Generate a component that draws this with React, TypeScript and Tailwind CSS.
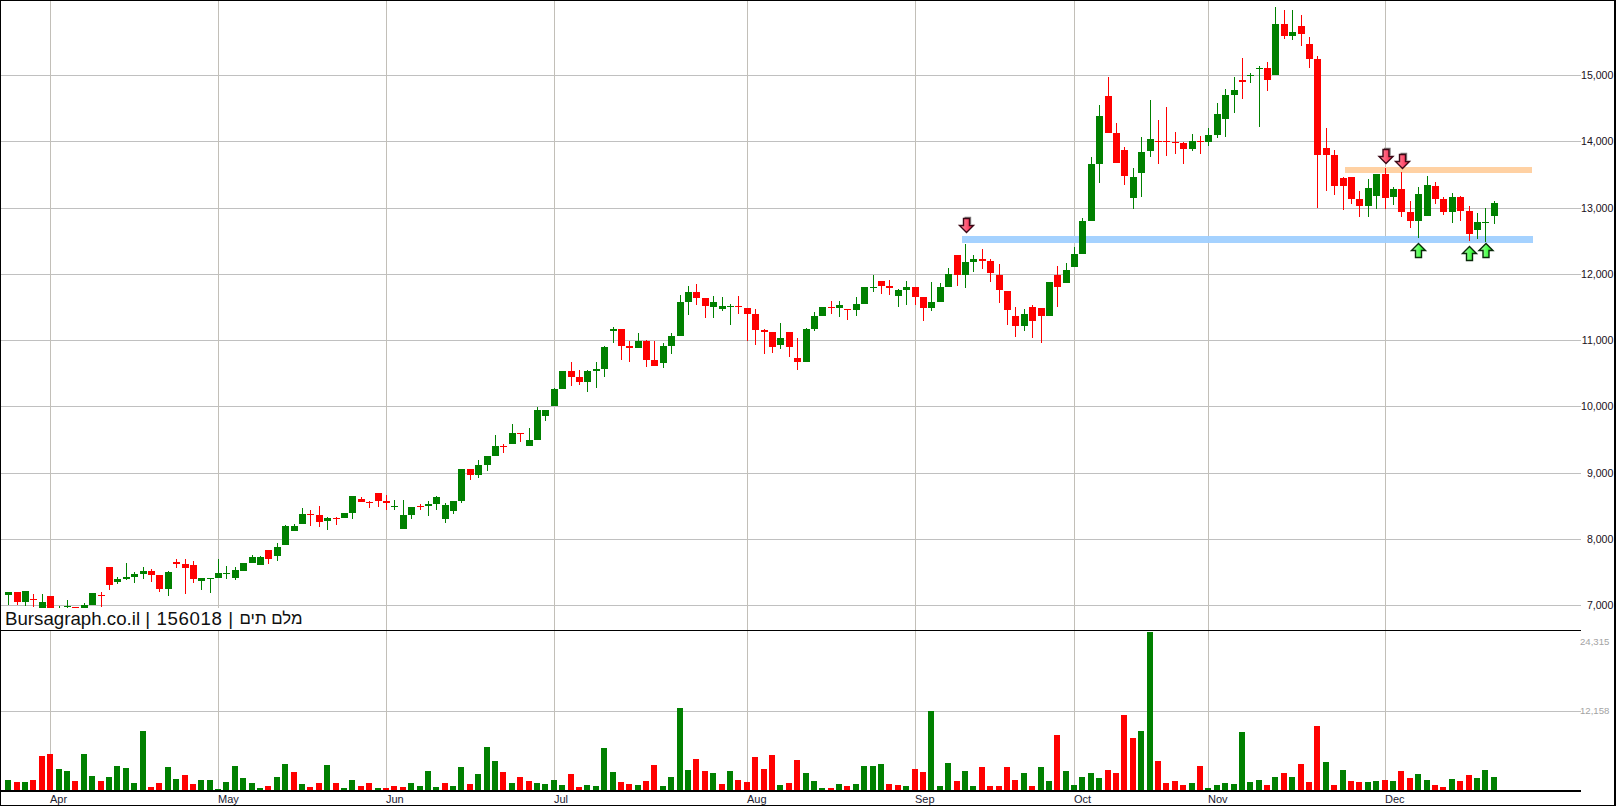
// Bursagraph daily candlestick chart with volume pane

type Side = 'g' | 'r';

const GREEN = '#008000';
const RED = '#ff0000';
const GRID = '#c0c0c0';
const GRID_V = '#c2bfb8';
const PLOT_RIGHT = 1581;
const BASE_Y = 790;

// [side, high, low, bodyTop, bodyBottom] in page pixels
const candles: [Side, number, number, number, number][] = [
  ['g', 592, 605, 592, 595], ['r', 592, 605, 592, 602], ['g', 591, 606, 591, 602], ['r', 594, 607, 599, 600],
  ['g', 594, 608, 602, 610], ['r', 596, 610, 596, 610], ['g', 606, 612, 608, 612], ['g', 600, 612, 606, 607],
  ['r', 607, 610, 607, 608], ['g', 603, 610, 605, 610], ['g', 593, 605, 593, 605], ['r', 592, 607, 595, 596],
  ['r', 567, 590, 567, 585], ['g', 577, 584, 579, 582], ['g', 563, 580, 577, 579], ['g', 572, 583, 574, 577],
  ['g', 567, 579, 571, 574], ['r', 569, 582, 571, 575], ['r', 575, 592, 575, 589], ['g', 571, 596, 572, 589],
  ['r', 559, 568, 562, 564], ['r', 559, 594, 564, 568], ['r', 561, 583, 565, 579], ['g', 578, 590, 578, 581],
  ['g', 578, 593, 578, 579], ['g', 559, 578, 573, 578], ['g', 566, 579, 573, 574], ['g', 567, 580, 570, 578],
  ['g', 563, 571, 563, 571], ['g', 555, 563, 557, 563], ['g', 556, 565, 557, 565], ['r', 550, 564, 550, 559],
  ['g', 543, 561, 547, 556], ['g', 525, 545, 526, 545], ['g', 524, 531, 526, 531], ['g', 508, 524, 514, 524],
  ['r', 510, 526, 514, 515], ['r', 506, 527, 515, 522], ['g', 517, 530, 518, 521], ['r', 517, 525, 518, 519],
  ['g', 513, 518, 513, 518], ['g', 496, 519, 496, 513], ['r', 497, 502, 499, 502], ['r', 501, 508, 502, 503],
  ['r', 493, 507, 493, 501], ['r', 495, 510, 501, 503], ['g', 500, 510, 506, 507], ['g', 500, 529, 515, 529],
  ['g', 507, 519, 507, 515], ['r', 504, 510, 506, 507], ['g', 501, 516, 504, 506], ['g', 496, 510, 497, 504],
  ['g', 503, 523, 505, 519], ['g', 501, 514, 501, 511], ['g', 469, 503, 469, 501], ['r', 469, 480, 469, 475],
  ['g', 460, 478, 465, 475], ['g', 456, 471, 456, 465], ['g', 435, 456, 446, 456], ['r', 444, 453, 446, 447],
  ['g', 424, 444, 433, 444], ['r', 433, 442, 433, 434], ['g', 428, 446, 440, 446], ['g', 407, 440, 410, 440],
  ['g', 410, 421, 410, 416], ['g', 388, 406, 389, 406], ['g', 371, 389, 371, 389], ['r', 362, 386, 371, 377],
  ['r', 370, 385, 377, 382], ['g', 370, 392, 371, 382], ['g', 362, 388, 369, 371], ['g', 346, 377, 347, 369],
  ['g', 327, 343, 329, 331], ['r', 329, 360, 329, 346], ['r', 341, 362, 346, 348], ['g', 333, 348, 341, 348],
  ['r', 340, 367, 341, 360], ['r', 341, 366, 360, 366], ['g', 343, 368, 346, 363], ['g', 333, 354, 336, 346],
  ['g', 295, 336, 302, 336], ['g', 286, 315, 292, 302], ['r', 284, 305, 292, 298], ['r', 298, 318, 298, 306],
  ['g', 296, 318, 302, 307], ['g', 297, 311, 306, 309], ['g', 304, 325, 306, 307], ['r', 296, 314, 306, 307],
  ['r', 308, 341, 308, 314], ['r', 309, 345, 314, 330], ['r', 329, 354, 330, 332], ['r', 332, 353, 332, 347],
  ['g', 323, 349, 338, 345], ['r', 332, 357, 332, 347], ['r', 338, 370, 358, 362], ['g', 328, 362, 329, 362],
  ['g', 312, 331, 316, 329], ['g', 307, 316, 307, 316], ['r', 301, 314, 307, 308], ['g', 301, 317, 305, 308],
  ['r', 309, 320, 309, 310], ['g', 297, 316, 304, 310], ['g', 287, 304, 287, 304], ['g', 275, 292, 287, 288],
  ['r', 281, 294, 281, 286], ['r', 280, 295, 286, 288], ['g', 289, 307, 290, 296], ['g', 281, 305, 287, 290],
  ['r', 287, 305, 287, 297], ['r', 297, 321, 297, 308], ['g', 282, 311, 302, 308], ['g', 283, 302, 287, 302],
  ['g', 268, 287, 274, 287], ['r', 255, 286, 255, 275], ['g', 244, 288, 262, 275], ['g', 255, 272, 259, 262],
  ['r', 249, 269, 259, 261], ['r', 259, 282, 261, 273], ['r', 264, 303, 275, 290], ['r', 291, 325, 291, 310],
  ['r', 307, 337, 316, 326], ['g', 309, 331, 314, 326], ['r', 305, 338, 307, 321], ['r', 308, 343, 308, 316],
  ['g', 282, 316, 282, 316], ['r', 266, 307, 275, 287], ['g', 263, 283, 270, 283], ['g', 247, 267, 254, 267],
  ['g', 218, 254, 221, 254], ['g', 157, 221, 164, 221], ['g', 105, 183, 116, 164], ['r', 77, 133, 96, 133],
  ['r', 123, 163, 133, 163], ['r', 147, 185, 150, 176], ['g', 168, 209, 177, 198], ['g', 137, 197, 152, 173],
  ['g', 100, 157, 139, 151], ['r', 120, 164, 141, 142], ['r', 107, 156, 141, 142], ['r', 132, 154, 142, 143],
  ['r', 142, 164, 143, 149], ['g', 134, 151, 141, 149], ['r', 136, 154, 141, 142], ['g', 128, 146, 135, 142],
  ['g', 103, 138, 114, 135], ['g', 89, 137, 95, 119], ['g', 77, 113, 90, 95], ['r', 58, 99, 80, 82],
  ['g', 73, 83, 75, 76], ['g', 66, 127, 68, 69], ['r', 62, 91, 68, 80], ['g', 7, 75, 24, 75],
  ['r', 10, 39, 24, 36], ['g', 10, 40, 32, 36], ['r', 15, 46, 26, 34], ['r', 37, 68, 44, 59],
  ['r', 56, 208, 59, 155], ['r', 128, 191, 148, 155], ['r', 150, 195, 155, 186], ['r', 177, 210, 178, 186],
  ['r', 177, 204, 177, 199], ['r', 191, 217, 199, 206], ['g', 179, 217, 188, 206], ['g', 174, 209, 174, 196],
  ['r', 168, 209, 174, 198], ['g', 187, 205, 189, 197], ['r', 172, 217, 189, 212], ['r', 201, 228, 212, 221],
  ['g', 187, 238, 194, 221], ['g', 176, 216, 185, 216], ['r', 182, 204, 186, 199], ['r', 197, 215, 199, 212],
  ['g', 193, 223, 197, 212], ['r', 196, 221, 197, 211], ['r', 206, 241, 211, 234], ['g', 213, 239, 222, 230],
  ['g', 208, 242, 222, 223], ['g', 201, 224, 203, 216],
];

// [side, top of bar] in page pixels
const volumes: [Side, number][] = [
  ['g', 780], ['r', 782], ['g', 782], ['r', 780], ['r', 756], ['r', 754], ['g', 769], ['g', 771],
  ['r', 781], ['g', 754], ['g', 776], ['r', 781], ['g', 777], ['g', 766], ['g', 768], ['g', 783],
  ['g', 731], ['r', 787], ['r', 783], ['g', 767], ['g', 779], ['r', 775], ['r', 784], ['g', 780],
  ['g', 780], ['g', 789], ['g', 782], ['g', 766], ['g', 778], ['g', 783], ['g', 788], ['r', 786],
  ['g', 777], ['g', 764], ['r', 772], ['g', 784], ['r', 787], ['r', 783], ['g', 765], ['r', 783],
  ['g', 788], ['g', 780], ['r', 786], ['r', 783], ['g', 788], ['r', 788], ['r', 786], ['r', 787],
  ['g', 783], ['g', 786], ['g', 771], ['g', 787], ['r', 783], ['g', 786], ['g', 767], ['r', 784],
  ['g', 774], ['g', 747], ['g', 761], ['r', 772], ['g', 783], ['r', 777], ['r', 781], ['g', 783],
  ['g', 784], ['g', 780], ['g', 785], ['r', 774], ['r', 787], ['g', 785], ['g', 786], ['g', 748],
  ['g', 772], ['r', 782], ['r', 784], ['g', 785], ['r', 781], ['r', 765], ['g', 786], ['g', 777],
  ['g', 708], ['g', 770], ['r', 759], ['r', 771], ['g', 773], ['r', 784], ['g', 771], ['r', 780],
  ['r', 782], ['r', 757], ['r', 769], ['r', 755], ['g', 785], ['r', 783], ['r', 760], ['g', 773],
  ['g', 781], ['g', 788], ['r', 788], ['g', 784], ['r', 786], ['g', 784], ['g', 766], ['g', 766],
  ['g', 764], ['r', 784], ['r', 785], ['g', 786], ['r', 769], ['r', 772], ['g', 711], ['g', 786],
  ['g', 763], ['r', 781], ['g', 771], ['g', 786], ['r', 767], ['r', 786], ['r', 786], ['r', 767],
  ['r', 780], ['g', 773], ['r', 786], ['g', 767], ['g', 781], ['r', 735], ['g', 771], ['g', 785],
  ['g', 777], ['g', 773], ['g', 778], ['r', 770], ['r', 773], ['r', 715], ['r', 738], ['g', 731],
  ['g', 632], ['r', 761], ['r', 783], ['r', 781], ['r', 785], ['g', 783], ['r', 766], ['g', 788],
  ['g', 785], ['g', 783], ['g', 784], ['g', 732], ['g', 782], ['g', 780], ['r', 785], ['g', 777],
  ['r', 773], ['g', 777], ['r', 764], ['r', 782], ['r', 726], ['g', 762], ['r', 785], ['g', 770],
  ['r', 781], ['r', 782], ['g', 782], ['g', 781], ['r', 780], ['g', 781], ['r', 771], ['r', 778],
  ['g', 774], ['g', 780], ['r', 785], ['r', 787], ['g', 779], ['r', 781], ['r', 775], ['g', 778],
  ['g', 770], ['g', 777],
];

const priceLines = [
  { y: 75, label: '15,000' },
  { y: 141, label: '14,000' },
  { y: 208, label: '13,000' },
  { y: 274, label: '12,000' },
  { y: 340, label: '11,000' },
  { y: 406, label: '10,000' },
  { y: 473, label: '9,000' },
  { y: 539, label: '8,000' },
  { y: 605, label: '7,000' },
];

const months = [
  { i: 5, label: 'Apr' },
  { i: 25, label: 'May' },
  { i: 45, label: 'Jun' },
  { i: 65, label: 'Jul' },
  { i: 88, label: 'Aug' },
  { i: 108, label: 'Sep' },
  { i: 127, label: 'Oct' },
  { i: 143, label: 'Nov' },
  { i: 164, label: 'Dec' },
];

const barX = (i: number) => Math.floor(8.8 + 8.392 * i);

function Arrow({ cx, y, up }: { cx: number; y: number; up?: boolean }) {
  const d = up
    ? `M${cx} ${y}L${cx + 7} ${y + 7}H${cx + 3}V${y + 14}H${cx - 3}V${y + 7}H${cx - 7}Z`
    : `M${cx - 3} ${y}H${cx + 3}V${y + 7}H${cx + 7}L${cx} ${y + 14}L${cx - 7} ${y + 7}H${cx - 3}Z`;
  return (
    <g>
      {!up && <path d={`M${cx - 2} ${y - 1}H${cx + 4}V${y + 6}`} fill="none" stroke="#808080" strokeWidth="1.4" />}
      <path
        d={d}
        fill={up ? 'url(#arrowGreen)' : 'url(#arrowRed)'}
        stroke={up ? '#0a2a0a' : '#3c0816'}
        strokeWidth="1.4"
        strokeLinejoin="miter"
      />
    </g>
  );
}

function VerticalGrid({ y1, y2 }: { y1: number; y2: number }) {
  return (
    <>
      {months.map((m) => (
        <rect key={m.label} x={barX(m.i)} y={y1} width="1" height={y2 - y1} fill={GRID_V} />
      ))}
    </>
  );
}

function PricePane() {
  return (
    <div className="relative flex h-[629px] shrink-0">
      <svg className="block h-full w-[1580px] shrink-0" viewBox="1 1 1580 629" shapeRendering="crispEdges">
        <defs>
          <linearGradient id="arrowRed" x1="0" y1="0" x2="1" y2="0">
            <stop offset="0" stopColor="#ff9aa8" />
            <stop offset="0.6" stopColor="#ff4c6c" />
            <stop offset="1" stopColor="#e81840" />
          </linearGradient>
          <linearGradient id="arrowGreen" x1="0" y1="0" x2="1" y2="0">
            <stop offset="0" stopColor="#b4ffb4" />
            <stop offset="0.6" stopColor="#4cff4c" />
            <stop offset="1" stopColor="#18d818" />
          </linearGradient>
        </defs>
        {priceLines.map((l) => (
          <rect key={l.y} x="1" y={l.y} width={PLOT_RIGHT - 1} height="1" fill={GRID} />
        ))}
        <VerticalGrid y1={1} y2={630} />
        <rect x="1345" y="167" width="187" height="6" fill="#ffcf9e" fillOpacity="0.95" />
        <rect x="962" y="236" width="571" height="7" fill="#a0d0ff" fillOpacity="0.95" />
        {candles.map(([side, high, low, top, bottom], i) => {
          const x = barX(i);
          const fill = side === 'g' ? GREEN : RED;
          return (
            <g key={i} fill={fill}>
              <rect x={x} y={high} width="1" height={low - high} />
              <rect x={x - 3} y={top} width="7" height={bottom - top} />
            </g>
          );
        })}
        <g shapeRendering="auto">
          <Arrow cx={966.5} y={218.5} />
          <Arrow cx={1386} y={149.5} />
          <Arrow cx={1402.5} y={154.5} />
          <Arrow cx={1418.5} y={243.5} up />
          <Arrow cx={1469.5} y={246.5} up />
          <Arrow cx={1486} y={243.5} up />
        </g>
      </svg>
      <div className="flex flex-1 flex-col items-end pt-[41.4px] pr-px text-[10.6px] leading-none text-[#1a1020]">
        {priceLines.map((l) => (
          <span key={l.y} className="flex h-[66.25px] shrink-0 items-center">
            {l.label}
          </span>
        ))}
      </div>
      <div className="absolute bottom-0 left-0 flex h-[22px] w-[302px] items-center bg-white pl-[4px] text-[18.7px] leading-none whitespace-nowrap text-[#101010]">
        <span>Bursagraph.co.il&nbsp;</span>
        <span className="tracking-[0.6px]">| 156018 |&nbsp;</span>
        <span dir="rtl" className="text-[16.8px]">
          מלם תים
        </span>
      </div>
    </div>
  );
}

function VolumePane() {
  return (
    <div className="flex h-[162px] shrink-0">
      <svg className="block h-full w-[1580px] shrink-0" viewBox="1 630 1580 162" shapeRendering="crispEdges">
        <rect x="1" y="711" width={PLOT_RIGHT - 1} height="1" fill={GRID} />
        <VerticalGrid y1={630} y2={BASE_Y} />
        {volumes.map(([side, top], i) => (
          <rect
            key={i}
            x={barX(i) - 3}
            y={top}
            width="6"
            height={BASE_Y - top}
            fill={side === 'g' ? GREEN : RED}
          />
        ))}
        <rect x="1" y="630" width={PLOT_RIGHT - 1} height="1" fill="#000000" />
        <rect x="1" y={BASE_Y} width={PLOT_RIGHT - 1} height="2" fill="#000000" />
      </svg>
      <div className="-ml-px flex flex-col gap-[59px] pt-[7px] text-[9.6px] leading-[10px] text-[#a3a3a3]">
        <span>24,315</span>
        <span>12,158</span>
      </div>
    </div>
  );
}

function DateAxis() {
  return (
    <div className="flex flex-1 pt-px pl-[49px] text-[11px] leading-[12px] text-[#202030]">
      {months.map((m, idx) => (
        <span
          key={m.label}
          className="shrink-0"
          style={idx < months.length - 1 ? { width: barX(months[idx + 1].i) - barX(m.i) } : undefined}
        >
          {m.label}
        </span>
      ))}
    </div>
  );
}

export default function App() {
  return (
    <div className="flex h-[806px] w-[1616px] flex-col overflow-hidden border-t border-r-2 border-b border-l border-black bg-white [font-family:'Liberation_Sans',Arial,sans-serif]">
      <PricePane />
      <VolumePane />
      <DateAxis />
    </div>
  );
}
